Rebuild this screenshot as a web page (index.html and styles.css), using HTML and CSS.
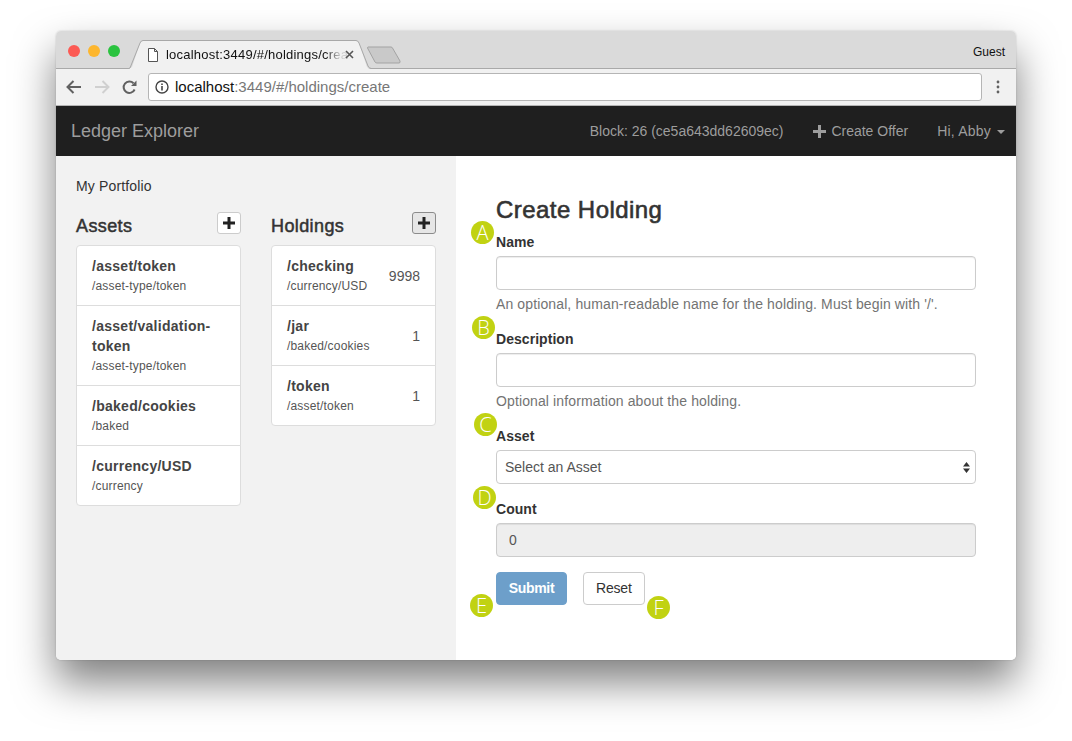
FILE: index.html
```html
<!DOCTYPE html>
<html lang="en">
<head>
    <meta charset="UTF-8">
    <meta name="viewport" content="width=device-width, initial-scale=1.0">
    <title>Ledger Explorer</title>
    <link rel="stylesheet" href="styles.css">
</head>
<body>
    <div class="window">
        <div class="tabstrip">
            <div class="lights">
                <span class="light red"></span>
                <span class="light orange"></span>
                <span class="light green"></span>
            </div>
            <div class="tab">
                <svg class="tab-shape" width="244" height="30" viewBox="0 0 244 30">
                    <path d="M0.5 29 L4 27 L12 3 Q13 1 15 1 L228 1 Q230 1 231 3 L239 27 Q240 28.5 243.5 29 Z" fill="#f1f1f1" stroke="none"/>
                    <path d="M0.5 28.5 L2 28 L12 3 Q13 .5 15 .5 L228 .5 Q230 .5 231 3 L240 26 Q241 28.5 243.5 28.5" fill="none" stroke="#a8a8a8"/>
                </svg>
                <svg class="file-icon" width="12" height="14" viewBox="0 0 12 14">
                    <path d="M1.5 .5 H7.5 L10.5 3.5 V13.5 H1.5 Z M7.5 .5 V3.5 H10.5" fill="#fff" stroke="#555"/>
                </svg>
                <span class="tab-title">localhost:3449/#/holdings/crea</span>
                <svg class="tab-close" width="9" height="9" viewBox="0 0 9 9">
                    <path d="M1 1 L8 8 M8 1 L1 8" stroke="#555" stroke-width="1.6"/>
                </svg>
            </div>
            <svg class="newtab" width="34" height="18" viewBox="0 0 34 18">
                <path d="M1 1 H24 Q25 1 25.500 2 L33 15 Q33.500 17 32 17 H10 Q8.500 17 8 16 L.5 2 Q.5 1 1 1 Z" fill="#c9c9c9" stroke="#a3a3a3"/>
            </svg>
            <span class="guest">Guest</span>
        </div>

        <div class="toolbar">
            <svg width="16" height="14" viewBox="0 0 16 14">
                <path d="M15 7 H2 M7.500 1 L1.500 7 L7.500 13" fill="none" stroke="#616161" stroke-width="2"/>
            </svg>
            <svg width="16" height="14" viewBox="0 0 16 14">
                <path d="M1 7 H14 M8.500 1 L14.500 7 L8.500 13" fill="none" stroke="#d0d0d0" stroke-width="2"/>
            </svg>
            <svg width="15" height="15" viewBox="0 0 15 15">
                <path d="M12.600 9.500 A5.700 5.700 0 1 1 11.500 3.300" fill="none" stroke="#616161" stroke-width="2"/>
                <path d="M9 6 H14.500 V.5 Z" fill="#616161"/>
            </svg>
            <div class="urlbar">
                <svg width="14" height="14" viewBox="0 0 14 14">
                    <circle cx="7" cy="7" r="6" fill="none" stroke="#444" stroke-width="1.400"/>
                    <path d="M7 6 V10.500 M7 3.400 V5" stroke="#444" stroke-width="1.600"/>
                </svg>
                <span class="url"><span class="url-host">localhost</span>:3449/#/holdings/create</span>
            </div>
            <svg class="dots" width="4" height="14" viewBox="0 0 4 14">
                <circle cx="2" cy="2" r="1.400" fill="#616161"/>
                <circle cx="2" cy="7" r="1.400" fill="#616161"/>
                <circle cx="2" cy="12" r="1.400" fill="#616161"/>
            </svg>
        </div>

        <nav class="navbar">
            <span class="brand">Ledger Explorer</span>
            <div class="nav-right">
                <span>Block: 26 (ce5a643dd62609ec)</span>
                <span class="nav-offer">
                    <svg width="13" height="13" viewBox="0 0 13 13"><path d="M5 0 H8 V5 H13 V8 H8 V13 H5 V8 H0 V5 H5 Z" fill="#9d9d9d"/></svg>
                    Create Offer
                </span>
                <span class="nav-user">Hi, Abby <i class="caret"></i></span>
            </div>
        </nav>

        <div class="content">
            <aside class="sidebar">
                <div class="portfolio">My Portfolio</div>
                <div class="columns">
                    <section class="column">
                        <div class="column-head">
                            <h3>Assets</h3>
                            <button class="add">
                                <svg width="12" height="12" viewBox="0 0 12 12"><path d="M4.500 0 H7.500 V4.500 H12 V7.500 H7.500 V12 H4.500 V7.500 H0 V4.500 H4.500 Z" fill="#222"/></svg>
                            </button>
                        </div>
                        <div class="list">
                            <div class="item"><div><strong>/asset/token</strong><small>/asset-type/token</small></div></div>
                            <div class="item"><div><strong>/asset/validation-token</strong><small>/asset-type/token</small></div></div>
                            <div class="item"><div><strong>/baked/cookies</strong><small>/baked</small></div></div>
                            <div class="item"><div><strong>/currency/USD</strong><small>/currency</small></div></div>
                        </div>
                    </section>
                    <section class="column">
                        <div class="column-head">
                            <h3>Holdings</h3>
                            <button class="add active">
                                <svg width="12" height="12" viewBox="0 0 12 12"><path d="M4.500 0 H7.500 V4.500 H12 V7.500 H7.500 V12 H4.500 V7.500 H0 V4.500 H4.500 Z" fill="#222"/></svg>
                            </button>
                        </div>
                        <div class="list">
                            <div class="item"><div><strong>/checking</strong><small>/currency/USD</small></div><span class="count">9998</span></div>
                            <div class="item"><div><strong>/jar</strong><small>/baked/cookies</small></div><span class="count">1</span></div>
                            <div class="item"><div><strong>/token</strong><small>/asset/token</small></div><span class="count">1</span></div>
                        </div>
                    </section>
                </div>
            </aside>

            <main class="main">
                <h2>Create Holding</h2>
                <form>
                    <div class="form-group">
                        <label for="name">Name</label>
                        <input type="text" id="name" class="form-control">
                        <p class="help">An optional, human-readable name for the holding. Must begin with '/'.</p>
                    </div>
                    <div class="form-group">
                        <label for="description">Description</label>
                        <input type="text" id="description" class="form-control">
                        <p class="help">Optional information about the holding.</p>
                    </div>
                    <div class="form-group">
                        <label for="asset">Asset</label>
                        <div class="select-wrap">
                            <select id="asset" class="form-control">
                                <option>Select an Asset</option>
                            </select>
                            <svg class="select-arrows" width="7" height="11" viewBox="0 0 7 11">
                                <path d="M3.500 0 L7 4.500 H0 Z M0 6.500 H7 L3.500 11 Z" fill="#333"/>
                            </svg>
                        </div>
                    </div>
                    <div class="form-group">
                        <label for="count">Count</label>
                        <input type="text" id="count" class="form-control" value="0" disabled>
                    </div>
                    <div class="buttons">
                        <button type="button" class="btn btn-primary">Submit</button>
                        <button type="button" class="btn">Reset</button>
                    </div>
                </form>

                <!-- lettered callouts sit on top of the form -->
                <span class="callout callout-a">A</span>
                <span class="callout callout-b">B</span>
                <span class="callout callout-c">C</span>
                <span class="callout callout-d">D</span>
                <span class="callout callout-e">E</span>
                <span class="callout callout-f">F</span>
            </main>
        </div>
    </div>
</body>
</html>
```

FILE: styles.css
```css
/* General Styles */
html, body {
    height: 100%;
}
body {
    margin: 0;
    padding: 31px 56px 0;
    box-sizing: border-box;
    overflow: hidden;
    background-color: #fff;
    color: #333;
    font-family: "Liberation Sans", Arial, sans-serif;
    font-size: 14px;
    line-height: 20px;
}
.window {
    display: flex;
    flex-direction: column;
    height: 629px;
    border-radius: 5px;
    overflow: hidden;
}
body::before {
    content: "";
    position: absolute;
    left: 56px;
    top: 31px;
    width: 960px;
    height: 629px;
    border-radius: 5px;
    box-shadow: 0 22px 42px rgba(0, 0, 0, 0.5), 0 0 2px rgba(0, 0, 0, 0.2);
}
.window > * {
    position: relative;
}

/* Browser chrome */
.tabstrip {
    display: flex;
    align-items: flex-end;
    height: 38px;
    box-sizing: border-box;
    padding: 0 11px 0 12px;
    background-color: #dadada;
    border-bottom: 1px solid #a9a9a9;
}
.lights {
    display: flex;
    gap: 8px;
    align-self: flex-start;
    margin-top: 14px;
}
.light {
    width: 12px;
    height: 12px;
    border-radius: 50%;
}
.red { background-color: #fc5a54; }
.orange { background-color: #fdb62e; }
.green { background-color: #2ac33f; }
.tab {
    position: relative;
    display: flex;
    align-items: center;
    width: 244px;
    height: 29px;
    box-sizing: border-box;
    margin: 0 0 -1px 8px;
    padding: 0 0 0 19px;
    font-size: 13px;
    letter-spacing: 0.22px;
    color: #111;
}
.tab-shape {
    position: absolute;
    left: 0;
    top: 0;
}
.file-icon, .tab-title, .tab-close {
    position: relative;
}
.tab-title {
    flex: none;
    margin-left: 7px;
    white-space: nowrap;
    -webkit-mask-image: linear-gradient(to right, #000 87%, rgba(0, 0, 0, 0.15) 96%);
    mask-image: linear-gradient(to right, #000 87%, rgba(0, 0, 0, 0.15) 96%);
}
.tab-close {
    flex: none;
    margin-left: -3px;
}
.newtab {
    margin: 0 0 4px -5px;
}
.guest {
    align-self: flex-start;
    margin-top: 11px;
    margin-left: auto;
    font-size: 12px;
    color: #111;
}
.toolbar {
    display: flex;
    align-items: center;
    height: 37px;
    box-sizing: border-box;
    padding: 0 16px 0 10px;
    background-color: #f1f1f1;
    border-bottom: 1px solid #b4b4b4;
    gap: 12px;
}
.urlbar {
    display: flex;
    align-items: center;
    flex: 1;
    height: 28px;
    box-sizing: border-box;
    margin: 0 2px 0 -1px;
    padding-left: 6px;
    gap: 6px;
    background-color: #fff;
    border: 1px solid #b5b5b5;
    border-radius: 3px;
    font-size: 15px;
    color: #777;
}
.url-host {
    color: #111;
}

/* Navbar */
.navbar {
    display: flex;
    align-items: center;
    justify-content: space-between;
    flex: none;
    height: 50px;
    padding: 0 11px 0 15px;
    background-color: #1f1f1f;
    color: #9d9d9d;
}
.brand {
    font-size: 18px;
}
.nav-right {
    display: flex;
    align-items: center;
    gap: 29px;
}
.nav-offer svg {
    margin-right: 2px;
    vertical-align: -2px;
}
.nav-user {
    letter-spacing: 0.2px;
}
.caret {
    display: inline-block;
    margin-left: 2px;
    vertical-align: 2px;
    border-top: 4px solid #9d9d9d;
    border-left: 4px solid transparent;
    border-right: 4px solid transparent;
}

/* Sidebar */
.content {
    display: flex;
    flex: 1;
}
.sidebar {
    width: 400px;
    box-sizing: border-box;
    padding: 20px;
    background-color: #f2f2f2;
}
.portfolio {
    letter-spacing: 0.15px;
}
.columns {
    display: flex;
    gap: 30px;
    margin-top: 16px;
}
.column {
    width: 165px;
}
.column-head {
    display: flex;
    justify-content: space-between;
    height: 33px;
}
h3 {
    margin: 4px 0 0;
    font-size: 18px;
    font-weight: normal;
    letter-spacing: 0.4px;
    -webkit-text-stroke: 0.5px #333;
}
.add {
    display: flex;
    align-items: center;
    justify-content: center;
    width: 24px;
    height: 22px;
    padding: 0;
    background-color: #fff;
    border: 1px solid #ccc;
    border-radius: 3px;
}
.add.active {
    background-color: #e6e6e6;
    border-color: #8c8c8c;
}
.list {
    border-radius: 4px;
}
.item {
    display: flex;
    align-items: center;
    justify-content: space-between;
    margin-bottom: -1px;
    padding: 10px 15px;
    background-color: #fff;
    border: 1px solid #ddd;
    color: #555;
}
.item:first-child {
    border-radius: 4px 4px 0 0;
}
.item:last-child {
    border-radius: 0 0 4px 4px;
}
.item strong {
    display: block;
    color: #444;
    letter-spacing: 0.27px;
}
.item small {
    display: block;
    padding-top: 1px;
    font-size: 12px;
    line-height: 18px;
    letter-spacing: 0.18px;
}

/* Form */
.main {
    position: relative;
    flex: 1;
    box-sizing: border-box;
    padding: 40px;
    background-color: #fff;
}
h2 {
    margin: 1px 0 8px;
    font-size: 24px;
    line-height: 26px;
    font-weight: normal;
    letter-spacing: 0.45px;
    -webkit-text-stroke: 0.6px #333;
}
.form-group {
    margin-bottom: 14px;
}
.form-group label {
    display: block;
    padding-top: 1px;
    margin-bottom: 4px;
    font-weight: bold;
    letter-spacing: 0.05px;
}
.form-control {
    display: block;
    width: 100%;
    height: 34px;
    box-sizing: border-box;
    padding: 6px 12px;
    background-color: #fff;
    border: 1px solid #ccc;
    border-radius: 4px;
    font: inherit;
    color: #555;
    box-shadow: inset 0 1px 1px rgba(0, 0, 0, 0.075);
}
.form-control:disabled {
    background-color: #eee;
    opacity: 1;
}
.select-wrap {
    position: relative;
}
select.form-control {
    -webkit-appearance: none;
    appearance: none;
    padding-left: 8px;
    box-shadow: none;
}
.select-arrows {
    position: absolute;
    right: 6px;
    top: 12px;
}
.help {
    margin: 5px 0 0;
    line-height: 19px;
    letter-spacing: 0.12px;
    color: #737373;
}
.buttons {
    display: flex;
    gap: 16px;
    margin-top: 15px;
}
.btn {
    height: 33px;
    padding: 0 12px 1px;
    background-color: #fff;
    border: 1px solid #ccc;
    border-radius: 4px;
    font: inherit;
    letter-spacing: -0.2px;
    color: #333;
}
.btn-primary {
    width: 71px;
    padding: 0 0 1px;
    background-color: #6d9fca;
    border-color: #6d9fca;
    letter-spacing: -0.3px;
    color: #fff;
    font-weight: bold;
}

/* Callouts */
.callout {
    position: absolute;
    width: 23px;
    height: 23px;
    border-radius: 50%;
    background-color: #c1d212;
    color: #fff;
    font-family: "Open Sans", sans-serif;
    font-size: 20px;
    font-weight: 300;
    line-height: 23px;
    text-align: center;
}
.callout-a { left: 15px; top: 65px; }
.callout-b { left: 16px; top: 160px; }
.callout-c { left: 18px; top: 257px; }
.callout-d { left: 17px; top: 330px; }
.callout-e { left: 14px; top: 438px; }
.callout-f { left: 191px; top: 440px; }
```
